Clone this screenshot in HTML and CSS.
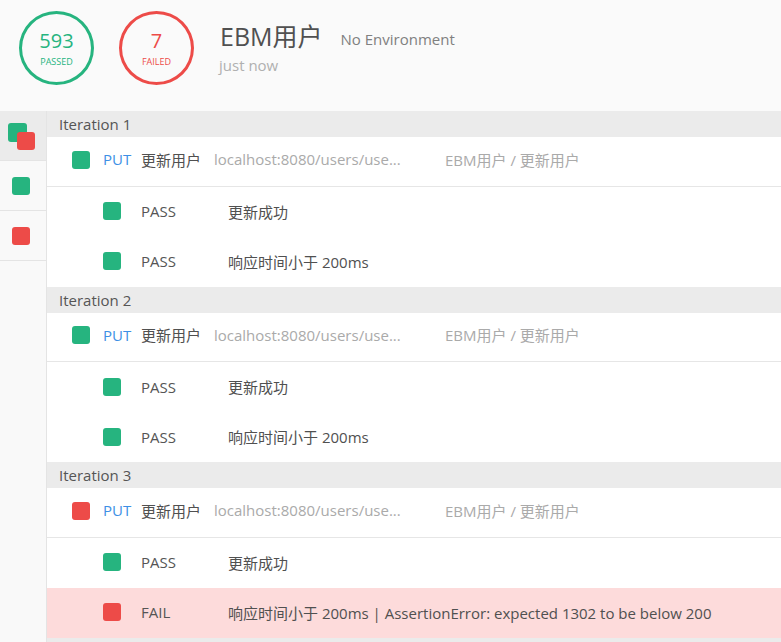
FILE: index.html
```html
<!DOCTYPE html>
<html>
<head>
<meta charset="utf-8">
<link rel="stylesheet" href="styles.css">
</head>
<body>
<div class="header">
  <div class="circle pass"><div class="num">593</div><div class="lbl">PASSED</div></div>
  <div class="circle fail"><div class="num">7</div><div class="lbl">FAILED</div></div>
  <div class="info">
    <div class="title-row"><span class="title">EBM用户</span><span class="env">No Environment</span></div>
    <div class="time">just now</div>
  </div>
</div>
<div class="body">
  <div class="sidebar">
    <div class="side-item active"><span class="stack"><span class="sq green back"></span><span class="sq red front"></span></span></div>
    <div class="side-item"><span class="sq green"></span></div>
    <div class="side-item"><span class="sq red"></span></div>
  </div>
  <div class="main">
    <div class="iter">Iteration 1</div>
    <div class="req"><span class="sq green"></span><span class="method">PUT</span><span class="rname">更新用户</span><span class="url">localhost:8080/users/use...</span><span class="path">EBM用户 / 更新用户</span></div>
    <div class="test"><span class="sq green"></span><span class="status">PASS</span><span class="tname">更新成功</span></div>
    <div class="test"><span class="sq green"></span><span class="status">PASS</span><span class="tname">响应时间小于 200ms</span></div>
    <div class="iter">Iteration 2</div>
    <div class="req"><span class="sq green"></span><span class="method">PUT</span><span class="rname">更新用户</span><span class="url">localhost:8080/users/use...</span><span class="path">EBM用户 / 更新用户</span></div>
    <div class="test"><span class="sq green"></span><span class="status">PASS</span><span class="tname">更新成功</span></div>
    <div class="test"><span class="sq green"></span><span class="status">PASS</span><span class="tname">响应时间小于 200ms</span></div>
    <div class="iter">Iteration 3</div>
    <div class="req"><span class="sq red"></span><span class="method">PUT</span><span class="rname">更新用户</span><span class="url">localhost:8080/users/use...</span><span class="path">EBM用户 / 更新用户</span></div>
    <div class="test"><span class="sq green"></span><span class="status">PASS</span><span class="tname">更新成功</span></div>
    <div class="test failed"><span class="sq red"></span><span class="status">FAIL</span><span class="tname">响应时间小于 200ms | AssertionError: expected 1302 to be below 200</span></div>
    <div class="iter"></div>
  </div>
</div>
</body>
</html>
```
FILE: styles.css
```css
html, body { margin: 0; padding: 0; }
body {
  font-family: "Open Sans", "Noto Sans CJK SC", sans-serif;
  background: #fafafa;
  color: #505050;
  width: 781px;
  height: 642px;
  overflow: hidden;
}
.header {
  height: 111px;
  box-sizing: border-box;
  padding: 11px 0 0 19px;
  display: flex;
  align-items: flex-start;
  background: #fafafa;
}
.circle {
  width: 75px;
  height: 74px;
  box-sizing: border-box;
  border: 3px solid;
  border-radius: 50%;
  display: flex;
  flex-direction: column;
  align-items: center;
  justify-content: center;
  margin-right: 25px;
}
.circle.pass { border-color: #26b47f; color: #26b47f; }
.circle.fail { border-color: #ed4b48; color: #ed4b48; }
.num { font-size: 20px; line-height: 24px; margin-top: 0; }
.lbl { font-size: 9px; line-height: 12px; letter-spacing: 0; margin-top: 3px; }
.info { margin-left: 1px; padding-top: 9px; }
.title-row { display: flex; align-items: baseline; }
.title { font-size: 25px; line-height: 32px; color: #505050; }
.env { font-size: 15px; color: #808080; margin-left: 18px; position: relative; top: -1px; }
.time { font-size: 15px; color: #b0b0b0; line-height: 20px; margin-top: 3px; margin-left: -1px; }

.body { display: flex; height: 531px; }
.sidebar {
  width: 46px;
  border-right: 1px solid #e4e4e4;
  background: #f9f9f9;
  flex: none;
}
.side-item {
  height: 49px;
  border-bottom: 1px solid #e4e4e4;
  display: flex;
  align-items: center;
  justify-content: center;
  padding-right: 5px;
}
.side-item.active { background: #ebebeb; }
.stack { position: relative; width: 28px; height: 28px; display: block; margin-left: 2px; margin-top: 2px; }
.stack .back { position: absolute; left: 0; top: 0; width: 19px; height: 19px; }
.stack .front { position: absolute; left: 9px; top: 9px; }

.main { flex: 1; background: #fff; }
.sq {
  display: inline-block;
  width: 18px;
  height: 18px;
  border-radius: 3px;
  flex: none;
}
.sq.green { background: #26b47f; }
.sq.red { background: #ed4b48; }
.iter {
  height: 26px;
  line-height: 26px;
  background: #ebebeb;
  padding-left: 12px;
  font-size: 15px;
  color: #555;
}
.req {
  height: 48.5px;
  box-sizing: border-box;
  height: 49.5px;
  padding-bottom: 3px;
  border-bottom: 1px solid #e6e6e6;
  display: flex;
  align-items: center;
  padding-left: 25px;
  font-size: 15px;
}
.req span:not(.sq) { position: relative; top: -0.5px; }
.method { color: #3d8fe5; margin-left: 13px; width: 38px; }
.rname { color: #505050; width: 73px; }
.url { color: #aaaaaa; width: 231px; }
.path { color: #aaaaaa; }
.test {
  height: 50px;
  box-sizing: border-box;
  padding-bottom: 1px;
  display: flex;
  align-items: center;
  padding-left: 56px;
  font-size: 15px;
}
.test.failed { background: #fddbdb; }
.status { margin-left: 20px; width: 87px; color: #555; }
.tname { color: #505050; }
```
